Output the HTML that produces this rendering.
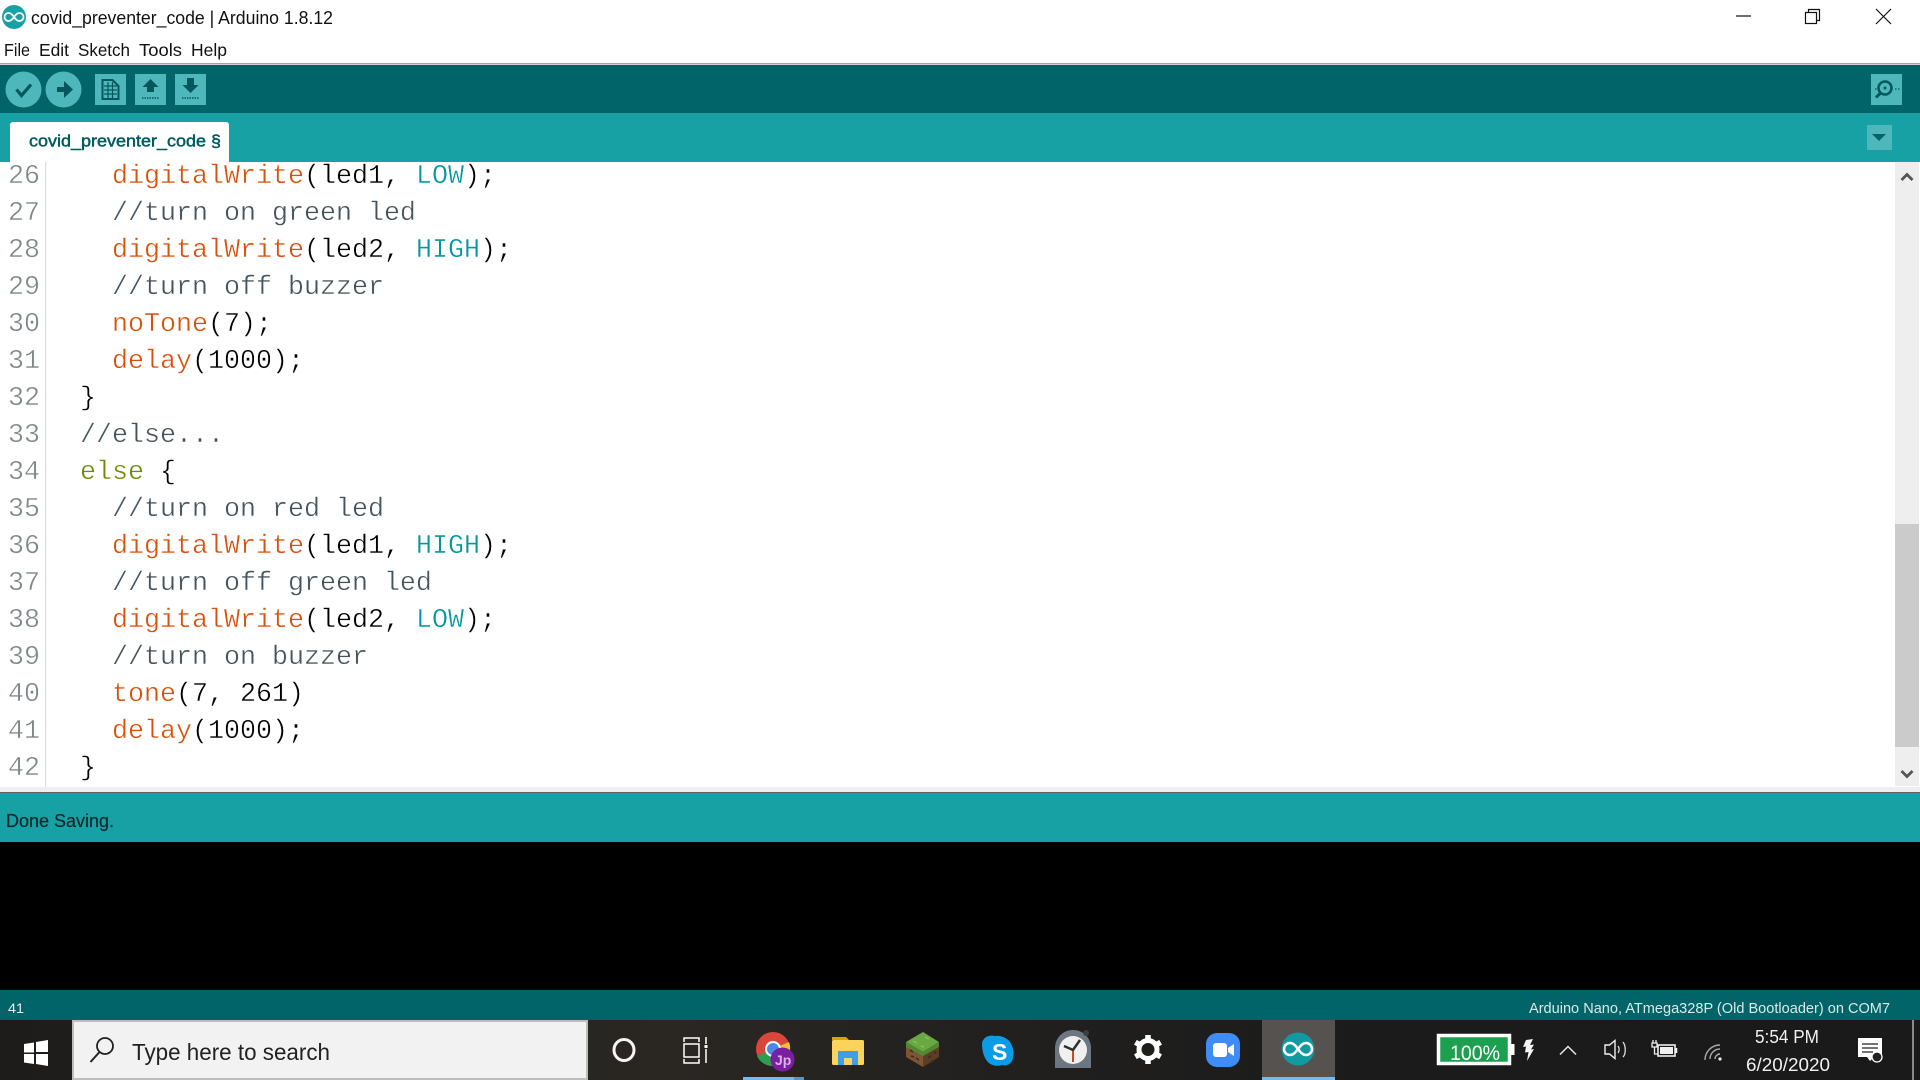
<!DOCTYPE html>
<html><head><meta charset="utf-8"><title>covid_preventer_code | Arduino 1.8.12</title>
<style>
html,body{margin:0;padding:0;background:#fff;width:1920px;height:1080px;overflow:hidden}
svg{display:block}
text{font-family:"Liberation Sans",sans-serif}
.c text{font-family:"Liberation Mono",monospace;font-size:26.67px;stroke:#fff;stroke-width:.4px}
.o{fill:#d9500a}.t{fill:#00979c}.m{fill:#46535b}.k{fill:#000}.g{fill:#6f8a00}.n{fill:#7f8688}
</style></head><body>
<svg width="1920" height="1080" viewBox="0 0 1920 1080" xmlns="http://www.w3.org/2000/svg">
<rect width="1920" height="1080" fill="#fff"/>
<!-- title -->
<circle cx="14" cy="17" r="12" fill="#17a1a5"/>
<path d="M14 17c-2-3-3.500-4-5.500-4a4 4 0 0 0 0 8c2 0 3.500-1 5.500-4c2-3 3.500-4 5.500-4a4 4 0 0 1 0 8c-2 0-3.500-1-5.500-4z" fill="none" stroke="#fff" stroke-width="1.800"/>
<text x="31" y="24" font-size="18" textLength="302" lengthAdjust="spacingAndGlyphs" fill="#111">covid_preventer_code | Arduino 1.8.12</text>
<path d="M1736 16h15" stroke="#111" stroke-width="1.200"/>
<rect x="1805.500" y="12.500" width="11" height="11" fill="#fff" stroke="#111" stroke-width="1.200"/>
<path d="M1808.500 12.500v-3h11v11h-3" fill="none" stroke="#111" stroke-width="1.200"/>
<path d="M1876 9l15 15M1891 9l-15 15" stroke="#111" stroke-width="1.200"/>
<g font-size="17.500" fill="#111">
<text x="4" y="56" textLength="26" lengthAdjust="spacingAndGlyphs">File</text>
<text x="39" y="56" textLength="30" lengthAdjust="spacingAndGlyphs">Edit</text>
<text x="78" y="56" textLength="52" lengthAdjust="spacingAndGlyphs">Sketch</text>
<text x="139" y="56" textLength="43" lengthAdjust="spacingAndGlyphs">Tools</text>
<text x="191" y="56" textLength="36" lengthAdjust="spacingAndGlyphs">Help</text>
</g>
<rect y="63" width="1920" height="1.500" fill="#a3a3a3"/>
<!-- toolbar -->
<rect y="65" width="1920" height="48" fill="#006468"/>
<rect y="113" width="1920" height="49" fill="#17a1a5"/>
<circle cx="23.500" cy="89.500" r="18" fill="#4db7bb"/>
<path d="M16.500 89.500l5 6 9.500-11" fill="none" stroke="#00585c" stroke-width="3.200"/>
<circle cx="63.500" cy="89.500" r="18" fill="#4db7bb"/>
<path d="M57 87h7v-6l9 8.500-9 8.500v-6h-7z" fill="#00585c"/>
<rect x="95" y="74" width="31" height="31" fill="#4db7bb"/>
<path d="M102.500 80h10l6 6v13h-16z" fill="none" stroke="#00585c" stroke-width="2"/>
<path d="M104 86h13M104 90h13M104 94h13M108 82v16M112.500 82v16" stroke="#00585c" stroke-width="1.200"/>
<rect x="135" y="74" width="31" height="31" fill="#4db7bb"/>
<path d="M150.500 79l8 8h-4.500v5h-7v-5h-4.500z" fill="#00585c"/>
<path d="M142 98h17" stroke="#00585c" stroke-width="1.500" stroke-dasharray="1.500 1"/>
<rect x="175" y="74" width="31" height="31" fill="#4db7bb"/>
<path d="M187 78h7v7h4.500l-8 8-8-8h4.500z" fill="#00585c"/>
<path d="M182 98h17" stroke="#00585c" stroke-width="1.500" stroke-dasharray="1.500 1"/>
<rect x="1871" y="74" width="31" height="31" fill="#4db7bb"/>
<circle cx="1885" cy="88" r="6.500" fill="none" stroke="#00585c" stroke-width="2.500"/>
<circle cx="1885" cy="88" r="1.500" fill="#00585c"/>
<path d="M1880.500 93l-4.500 4.500" stroke="#00585c" stroke-width="3"/>
<path d="M1875 89h3M1895 89h5" stroke="#00585c" stroke-width="1.200" stroke-dasharray="1.500 1.500"/>
<rect x="1867" y="125" width="25" height="25" fill="#4db7bb"/>
<path d="M1872 134h14l-7 7z" fill="#006468"/>
<!-- tab -->
<path d="M10 162v-37a3 3 0 0 1 3-3h213a3 3 0 0 1 3 3v37z" fill="#fff"/>
<text x="29" y="146.500" font-size="17" textLength="192" lengthAdjust="spacingAndGlyphs" fill="#005c5f" stroke="#005c5f" stroke-width=".5">covid_preventer_code §</text>
<!-- editor -->
<rect x="45" y="162" width="1.200" height="625" fill="#dcdcdc"/>
<g class="c">
<g class="n">
<text x="8" y="183">26</text><text x="8" y="220">27</text><text x="8" y="257">28</text><text x="8" y="294">29</text><text x="8" y="331">30</text><text x="8" y="368">31</text><text x="8" y="405">32</text><text x="8" y="442">33</text><text x="8" y="479">34</text><text x="8" y="516">35</text><text x="8" y="553">36</text><text x="8" y="590">37</text><text x="8" y="627">38</text><text x="8" y="664">39</text><text x="8" y="701">40</text><text x="8" y="738">41</text><text x="8" y="775">42</text>
</g>
<text x="112" y="183" xml:space="preserve"><tspan class="o">digitalWrite</tspan><tspan class="k">(led1, </tspan><tspan class="t">LOW</tspan><tspan class="k">);</tspan></text>
<text x="112" y="220" class="m">//turn on green led</text>
<text x="112" y="257" xml:space="preserve"><tspan class="o">digitalWrite</tspan><tspan class="k">(led2, </tspan><tspan class="t">HIGH</tspan><tspan class="k">);</tspan></text>
<text x="112" y="294" class="m">//turn off buzzer</text>
<text x="112" y="331"><tspan class="o">noTone</tspan><tspan class="k">(7);</tspan></text>
<text x="112" y="368"><tspan class="o">delay</tspan><tspan class="k">(1000);</tspan></text>
<text x="80" y="405" class="k">}</text>
<text x="80" y="442" class="m">//else...</text>
<text x="80" y="479" xml:space="preserve"><tspan class="g">else</tspan><tspan class="k"> {</tspan></text>
<text x="112" y="516" class="m">//turn on red led</text>
<text x="112" y="553" xml:space="preserve"><tspan class="o">digitalWrite</tspan><tspan class="k">(led1, </tspan><tspan class="t">HIGH</tspan><tspan class="k">);</tspan></text>
<text x="112" y="590" class="m">//turn off green led</text>
<text x="112" y="627" xml:space="preserve"><tspan class="o">digitalWrite</tspan><tspan class="k">(led2, </tspan><tspan class="t">LOW</tspan><tspan class="k">);</tspan></text>
<text x="112" y="664" class="m">//turn on buzzer</text>
<text x="112" y="701" xml:space="preserve"><tspan class="o">tone</tspan><tspan class="k">(7, 261)</tspan></text>
<text x="112" y="738"><tspan class="o">delay</tspan><tspan class="k">(1000);</tspan></text>
<text x="80" y="775" class="k">}</text>
</g>
<!-- scrollbar -->
<rect x="1895" y="162" width="24" height="624" fill="#eeeeee"/>
<rect x="1895" y="524" width="24" height="223" fill="#cbcbcb"/>
<path d="M1901.500 180l5.500-5.500 5.500 5.500" fill="none" stroke="#555" stroke-width="2.800"/>
<path d="M1901.500 771l5.500 5.500 5.500-5.500" fill="none" stroke="#555" stroke-width="2.800"/>
<!-- status -->
<rect y="787" width="1920" height="5" fill="#efefef"/>
<rect y="792" width="1920" height="1.500" fill="#5f6566"/>
<rect y="793" width="1920" height="49" fill="#17a1a5"/>
<text x="6" y="827" font-size="18" textLength="108" lengthAdjust="spacingAndGlyphs" fill="#06292c" stroke="#06292c" stroke-width=".2">Done Saving.</text>
<rect y="842" width="1920" height="148" fill="#000"/>
<rect y="990" width="1920" height="30" fill="#006468"/>
<text x="8" y="1013" font-size="14" textLength="16" lengthAdjust="spacingAndGlyphs" fill="#e4eeee">41</text>
<text x="1529" y="1013" font-size="14.500" textLength="361" lengthAdjust="spacingAndGlyphs" fill="#dbe8e8">Arduino Nano, ATmega328P (Old Bootloader) on COM7</text>
<!-- taskbar -->
<defs><linearGradient id="tb" x1="0" x2="1" y1="0" y2="0"><stop offset="0" stop-color="#1d1c1b"/><stop offset=".35" stop-color="#2a2723"/><stop offset=".55" stop-color="#201f1e"/><stop offset=".72" stop-color="#1b1b1b"/><stop offset="1" stop-color="#1a1a1a"/></linearGradient></defs>
<rect y="1020" width="1920" height="60" fill="url(#tb)"/>
<path d="M24 1044l10-1.500v10h-10zM36 1042l12-2v12h-12zM24 1054h10v10l-10-1.500zM36 1054h12v12l-12-2z" fill="#fff"/>
<rect x="73" y="1021" width="514" height="58" fill="#f2f2f2" stroke="#bdbdbd" stroke-width="2"/>
<circle cx="105" cy="1046" r="8" fill="none" stroke="#222" stroke-width="1.800"/>
<path d="M99.500 1052l-9 10" stroke="#222" stroke-width="2"/>
<text x="132" y="1060" font-size="23" textLength="198" lengthAdjust="spacingAndGlyphs" fill="#222">Type here to search</text>
<ellipse cx="624" cy="1050" rx="10" ry="10.500" fill="none" stroke="#f4f4f4" stroke-width="3"/>
<path d="M684 1042v-4h15v4M684 1059v4h15v-4M684 1044h15v13h-15zM706 1037v7M706 1049v14" fill="none" stroke="#fff" stroke-width="1.500"/>
<rect x="704.500" y="1045" width="3" height="3" fill="#fff"/>
<!-- chrome -->
<circle cx="773" cy="1049" r="17" fill="#d9473c"/>
<path d="M773 1049L757 1056a17 17 0 0 0 16 10z" fill="#2d9e51"/>
<path d="M773 1049l16-7a17 17 0 0 1 1 8l-6 14z" fill="#f5c02c"/>
<circle cx="773" cy="1049" r="8" fill="#fff"/>
<circle cx="773" cy="1049" r="6" fill="#4a88e8"/>
<circle cx="782.500" cy="1059.500" r="12" fill="#7b1fa2"/>
<text x="775" y="1065" font-size="14" font-weight="700" fill="#d7b4e6">Jp</text>
<rect x="743" y="1077" width="51" height="3" fill="#76b9ed"/>
<rect x="794" y="1077" width="10" height="3" fill="#5a94c0"/>
<!-- folder -->
<path d="M832 1037h14l3 3h-17z" fill="#e0a100"/>
<rect x="832" y="1040" width="32" height="25" rx="1.500" fill="#fcd45c"/>
<path d="M838 1065v-14h20v14h-6v-7h-8v7z" fill="#3f9fe6"/>
<!-- minecraft -->
<path d="M906 1042l17-10 16 10-16 10z" fill="#6aa843"/>
<path d="M906 1042l17 10v15l-17-10z" fill="#7d5534"/>
<path d="M923 1052l16-10v15l-16 10z" fill="#5c3d26"/>
<path d="M906 1042l17 10v4l-17-9zM923 1052l16-10v5l-16 9z" fill="#4f8a32"/>
<path d="M910 1050l3 2M916 1058l3 2M911 1056l3 1M928 1058l3-2M934 1053l2-1M930 1063l3-2" stroke="#3f2a1b" stroke-width="1.500"/>
<path d="M913 1041l4 2M925 1037l4 2M921 1046l3 1" stroke="#88c25a" stroke-width="1.500"/>
<!-- skype -->
<path d="M984 1039c2-3 7-4 11-3c7-1 15 3 17 10c2 5 2 8 1 11c0 5-5 10-11 8c-6 2-12 0-15-4c-4-5-5-12-5-18c0-1 1-3 2-4z" fill="#0a9ce4"/>
<text x="992" y="1060" font-size="23" font-weight="700" fill="#fff">S</text>
<!-- clock -->
<path d="M1055 1068v-20c0-10 8-18 18-18s18 8 18 18v20z" fill="#6d7781"/>
<circle cx="1073" cy="1050" r="14" fill="#f1f0ee"/>
<path d="M1064 1046l9 4 7-10" fill="none" stroke="#2c2f33" stroke-width="2.500"/>
<path d="M1073 1051v11" stroke="#d3431c" stroke-width="2"/>
<circle cx="1086" cy="1033" r="3" fill="#3c3f42"/>
<!-- gear -->
<circle cx="1148" cy="1049.500" r="9" fill="none" stroke="#fff" stroke-width="5"/>
<path d="M1148 1035v7M1148 1057v7M1135.400 1042.200l6 3.500M1154.600 1053.300l6 3.500M1135.400 1056.800l6-3.500M1154.600 1045.700l6-3.500" stroke="#fff" stroke-width="5.500"/>
<!-- zoom -->
<rect x="1206" y="1033" width="34" height="34" rx="11" fill="#3f8cf5"/>
<rect x="1213" y="1043" width="14" height="14" rx="3" fill="#fff"/>
<path d="M1228 1048l6-4v12l-6-4z" fill="#fff"/>
<!-- arduino -->
<rect x="1262" y="1020" width="73" height="60" fill="#55524f"/>
<rect x="1262" y="1077" width="73" height="3" fill="#76b9ed"/>
<circle cx="1298" cy="1049" r="16.500" fill="#119aa0"/>
<path d="M1298 1049c-3-4-5-6-8-6a6 6 0 0 0 0 12c3 0 5-2 8-6c3-4 5-6 8-6a6 6 0 0 1 0 12c-3 0-5-2-8-6z" fill="none" stroke="#fff" stroke-width="2.500"/>
<!-- tray -->
<rect x="1438.500" y="1035.500" width="71" height="28" fill="#1ca04f" stroke="#fff" stroke-width="3.500"/>
<rect x="1511" y="1044" width="3.500" height="11" fill="#fff"/>
<text x="1450" y="1060" font-size="21.500" textLength="50" lengthAdjust="spacingAndGlyphs" fill="#fff">100%</text>
<path d="M1526 1040l7-1-3 6 4-.5-3 5 3-.5-7 12 1.500-9-3.500.5 1-6-3 .5z" fill="#f4f4f4"/>
<path d="M1560 1054.500l8-8 8 8" fill="none" stroke="#e8e8e8" stroke-width="1.500"/>
<path d="M1605 1045v9h4.500l5.500 4.500v-18l-5.500 4.500z" fill="none" stroke="#eee" stroke-width="1.400"/>
<path d="M1618 1046c1.500 2 1.500 5 0 7M1623 1042c3 4 3 12 0 15" fill="none" stroke="#ddd" stroke-width="1.300"/>
<rect x="1658" y="1045" width="17" height="11" fill="none" stroke="#eee" stroke-width="1.600"/>
<rect x="1660" y="1047" width="13" height="7" fill="#f0f0f0"/>
<rect x="1675.500" y="1048" width="1.800" height="5" fill="#eee"/>
<path d="M1652 1043h5v4h-5zM1654.500 1047v7h3M1653 1040v3M1656 1040v3" fill="none" stroke="#eee" stroke-width="1.300"/>
<circle cx="1720" cy="1059" r="1.600" fill="#eee"/>
<path d="M1715 1059a5 5 0 0 1 5-5M1710 1059a10 10 0 0 1 10-10M1705 1060a15 15 0 0 1 15-15" fill="none" stroke="#aaa" stroke-width="1.400"/>
<text x="1787" y="1043" text-anchor="middle" font-size="18" textLength="64" lengthAdjust="spacingAndGlyphs" fill="#f0f0f0">5:54 PM</text>
<text x="1788" y="1071" text-anchor="middle" font-size="18" textLength="84" lengthAdjust="spacingAndGlyphs" fill="#f0f0f0">6/20/2020</text>
<path d="M1858 1038h24v19h-8l-4 4-3-4h-9z" fill="#fff"/>
<path d="M1862 1044h16M1862 1048h16M1862 1052h11" stroke="#222" stroke-width="1.300"/>
<circle cx="1877" cy="1057" r="5" fill="#222" stroke="#fff" stroke-width="1.300"/>
<rect x="1912" y="1020" width="2" height="60" fill="#8a8a8a"/>
</svg>
</body></html>
